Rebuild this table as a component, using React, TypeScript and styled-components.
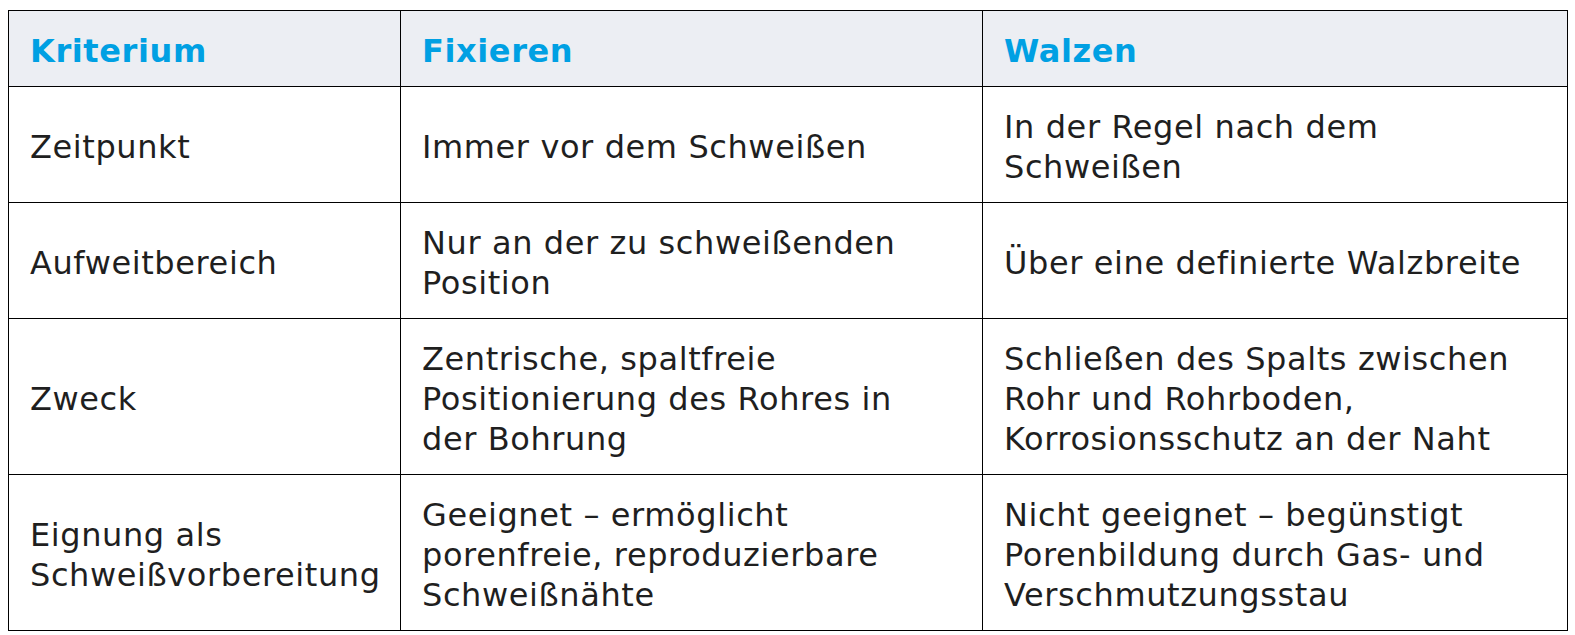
import styled, { createGlobalStyle } from "styled-components";

const GlobalStyle = createGlobalStyle`
  body {
    margin: 0;
    background: #ffffff;
    font-family: "DejaVu Sans", Verdana, sans-serif;
  }
`;

const Page = styled.div`
  padding: 10px 8px;
`;

const Table = styled.table`
  width: 1560px;
  table-layout: fixed;
  border-collapse: collapse;
  font-size: 32px;
  line-height: 40px;
  letter-spacing: 0.6px;
  color: #1f1f1f;
`;

const HeadCell = styled.th`
  background-color: #eceef3;
  color: #00a0e3;
  font-weight: bold;
  text-align: left;
  vertical-align: middle;
  padding: 19.5px 20px 15.5px 21px;
  border: 1px solid #000;
`;

const Cell = styled.td`
  text-align: left;
  vertical-align: middle;
  padding: 19.5px 20px 15.5px 21px;
  border: 1px solid #000;
  white-space: nowrap;
`;

interface RowData {
  criterion: string[];
  fixieren: string[];
  walzen: string[];
}

const rows: RowData[] = [
  {
    criterion: ["Zeitpunkt"],
    fixieren: ["Immer vor dem Schweißen"],
    walzen: ["In der Regel nach dem", "Schweißen"],
  },
  {
    criterion: ["Aufweitbereich"],
    fixieren: ["Nur an der zu schweißenden", "Position"],
    walzen: ["Über eine definierte Walzbreite"],
  },
  {
    criterion: ["Zweck"],
    fixieren: [
      "Zentrische, spaltfreie",
      "Positionierung des Rohres in",
      "der Bohrung",
    ],
    walzen: [
      "Schließen des Spalts zwischen",
      "Rohr und Rohrboden,",
      "Korrosionsschutz an der Naht",
    ],
  },
  {
    criterion: ["Eignung als", "Schweißvorbereitung"],
    fixieren: [
      "Geeignet – ermöglicht",
      "porenfreie, reproduzierbare",
      "Schweißnähte",
    ],
    walzen: [
      "Nicht geeignet – begünstigt",
      "Porenbildung durch Gas- und",
      "Verschmutzungsstau",
    ],
  },
];

const Lines = ({ lines }: { lines: string[] }) => (
  <>
    {lines.map((line, i) => (
      <span key={i}>
        {i > 0 && <br />}
        {line}
      </span>
    ))}
  </>
);

const App = () => {
  return (
    <Page>
      <GlobalStyle />
      <Table>
        <colgroup>
          <col style={{ width: 392 }} />
          <col style={{ width: 582 }} />
          <col style={{ width: 585 }} />
        </colgroup>
        <thead>
          <tr>
            <HeadCell>Kriterium</HeadCell>
            <HeadCell>Fixieren</HeadCell>
            <HeadCell>Walzen</HeadCell>
          </tr>
        </thead>
        <tbody>
          {rows.map((row) => (
            <tr key={row.criterion.join(" ")}>
              <Cell>
                <Lines lines={row.criterion} />
              </Cell>
              <Cell>
                <Lines lines={row.fixieren} />
              </Cell>
              <Cell>
                <Lines lines={row.walzen} />
              </Cell>
            </tr>
          ))}
        </tbody>
      </Table>
    </Page>
  );
};

export default App;
